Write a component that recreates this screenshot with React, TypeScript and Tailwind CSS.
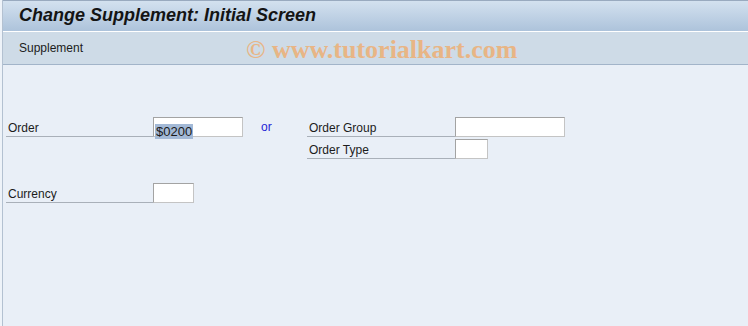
import React from 'react';

const font = { fontFamily: '"Liberation Sans", Arial, sans-serif' };

function Label({ text, w }: { text: string; w: string }) {
  return (
    <div className={`${w} h-[20px] border-b border-[#a9b0b9] pl-[2px] text-[12px] leading-[22px] text-[#1c1c1c] shrink-0 overflow-hidden`}>
      {text}
    </div>
  );
}

function Field({ w, children }: { w: string; children?: React.ReactNode }) {
  return (
    <div className={`${w} h-[20px] shrink-0 bg-white border border-[#a3a3a3] border-b-[#c4c4c4] border-r-[#c4c4c4] pl-[1px] pt-[1px]`}>
      {children}
    </div>
  );
}

export default function App() {
  return (
    <div className="relative w-[748px] h-[326px] flex bg-[#eef3f9] overflow-hidden" style={font}>
      <div className="w-[2px] shrink-0" />
      <div className="flex-1 flex flex-col border-l border-[#b3c1d1]">
        {/* title */}
        <div className="h-[31px] border-t border-[#99aabf] bg-gradient-to-b from-[#d3e1ef] to-[#adc3db] pl-[16px] pt-[5px] shrink-0">
          <div className="text-[18px] leading-[18px] font-bold italic text-[#141414]">
            Change Supplement: Initial Screen
          </div>
        </div>
        <div className="h-[1px] bg-white shrink-0" />
        {/* toolbar */}
        <div className="h-[33px] bg-[#cedbe7] border-b border-[#a2b4c9] flex items-center pl-[16px] shrink-0">
          <span className="text-[12px] text-[#1c1c1c]">Supplement</span>
        </div>
        {/* body */}
        <div className="flex-1 bg-[#e9eff7] pl-[3px] pt-[52px]">
          <div className="flex items-start">
            <Label text="Order" w="w-[147px]" />
            <Field w="w-[90px]">
              <span className="inline-block bg-[#a3b9d6] text-[#1a1a1a] text-[13px] leading-[15px] px-[1px]">$0200</span>
            </Field>
            <div className="w-[64px] h-[20px] pl-[18px] text-[12px] leading-[21px] text-[#1f1fd6] shrink-0">or</div>
            <Label text="Order Group" w="w-[148px]" />
            <Field w="w-[110px]" />
          </div>
          <div className="flex items-start mt-[2px] pl-[301px]">
            <Label text="Order Type" w="w-[148px]" />
            <Field w="w-[33px]" />
          </div>
          <div className="flex items-start mt-[24px]">
            <Label text="Currency" w="w-[147px]" />
            <Field w="w-[41px]" />
          </div>
        </div>
      </div>
      {/* watermark */}
      <div
        className="absolute left-[246px] top-[36px] text-[26px] leading-[28px] font-bold text-[#e8b585] whitespace-nowrap pointer-events-none"
        style={{ fontFamily: '"Liberation Serif", "Times New Roman", serif' }}
      >
        © www.tutorialkart.com
      </div>
    </div>
  );
}
